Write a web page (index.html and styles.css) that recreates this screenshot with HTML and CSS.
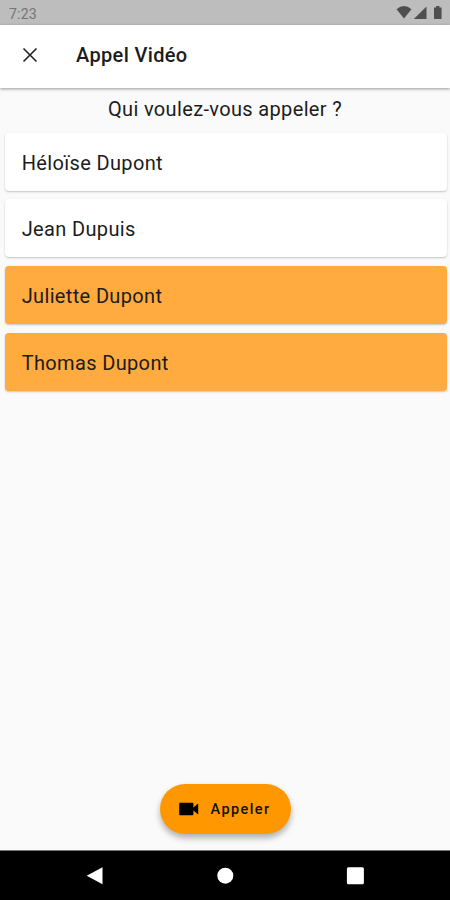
FILE: index.html
```
<!DOCTYPE html>
<html lang="fr">
<head>
    <meta charset="UTF-8">
    <meta name="viewport" content="width=device-width, initial-scale=1.0">
    <title>Appel Vidéo</title>
    <link rel="stylesheet" href="styles.css">
</head>
<body>
    <div class="status-bar">
        <span class="clock">7:23</span>
        <svg class="status-icons" width="48" height="16" viewBox="0 0 48 16">
            <path d="M0.5 4.2Q8-2.4 15.5 4.2L8 13.6z"></path>
            <path d="M30.5 1.5V14H17.8z"></path>
            <path d="M38 2.5h2.2V1h3.2v1.5h2.2V14H38z"></path>
        </svg>
    </div>

    <header class="app-bar">
        <button class="close-button" aria-label="Fermer">
            <svg width="16" height="16" viewBox="0 0 16 16">
                <path d="M1.5 1.5l13 13M14.5 1.5l-13 13"></path>
            </svg>
        </button>
        <h1>Appel Vidéo</h1>
    </header>

    <main class="content">
        <p class="question">Qui voulez-vous appeler ?</p>
        <ul class="contacts">
            <li class="contact">Héloïse Dupont</li>
            <li class="contact">Jean Dupuis</li>
            <li class="contact selected">Juliette Dupont</li>
            <li class="contact selected">Thomas Dupont</li>
        </ul>
        <button class="call-button">
            <svg width="20" height="14" viewBox="0 0 20 14">
                <path d="M1.2 0.8h12.2q1 0 1 1v3.6l4.8-4v11.2l-4.8-4v3.6q0 1-1 1H1.2q-1 0-1-1V1.8q0-1 1-1z"></path>
            </svg>
            <span>Appeler</span>
        </button>
    </main>

    <nav class="nav-bar">
        <svg width="18" height="18" viewBox="0 0 18 18"><path d="M16.5 0.3v17L0.7 8.8z"></path></svg>
        <svg width="18" height="18" viewBox="0 0 18 18"><circle cx="9.3" cy="8.7" r="8"></circle></svg>
        <svg width="18" height="18" viewBox="0 0 18 18"><rect x="0.9" y="0.2" width="17" height="17" rx="1.5"></rect></svg>
    </nav>
</body>
</html>
```
FILE: styles.css
```
:root {
    --bg-color: #fafafa;
    --primary: #ff9800;
    --selected: #ffab40;
    --text-color: #1c1c1c;
}

* {
    margin: 0;
    padding: 0;
    box-sizing: border-box;
}

body {
    font-family: Roboto, sans-serif;
    background-color: var(--bg-color);
    color: var(--text-color);
    height: 100vh;
    display: flex;
    flex-direction: column;
    overflow: hidden;
}

button {
    border: none;
    background: none;
    font-family: inherit;
    color: inherit;
}

.status-bar {
    height: 25px;
    flex-shrink: 0;
    padding: 2px 6px 0 9px;
    background-color: #bdbdbd;
    display: flex;
    align-items: center;
    justify-content: space-between;
}

.clock {
    font-size: 14px;
    letter-spacing: 0.2px;
    color: #757575;
}

.status-icons {
    fill: #4f4f4f;
    margin-top: -1px;
}

.app-bar {
    height: 63px;
    flex-shrink: 0;
    padding: 0 21px 3px;
    background-color: #fff;
    display: flex;
    align-items: center;
    gap: 38px;
    box-shadow: 0 1px 3px rgba(0, 0, 0, 0.4);
    z-index: 1;
}

.close-button {
    width: 17px;
    height: 20px;
    display: flex;
    align-items: center;
    justify-content: center;
}

.close-button svg {
    fill: none;
    stroke: #222;
    stroke-width: 1.6;
    flex-shrink: 0;
}

.app-bar h1 {
    font-size: 20px;
    font-weight: 500;
    line-height: 24px;
    letter-spacing: 0.35px;
}

.content {
    flex: 1;
    display: flex;
    flex-direction: column;
    align-items: center;
}

.question {
    height: 44.5px;
    padding-top: 9px;
    font-size: 20px;
    line-height: 24px;
    letter-spacing: 0.35px;
}

.contacts {
    align-self: stretch;
    list-style: none;
    display: flex;
    flex-direction: column;
    gap: 8.4px;
    padding: 0 3.5px 0 5px;
}

.contact {
    height: 58.3px;
    padding: 2px 16.7px 0;
    display: flex;
    align-items: center;
    background-color: #fff;
    border-radius: 4px;
    font-size: 20px;
    letter-spacing: 0.35px;
    box-shadow: 0 1px 2px rgba(0, 0, 0, 0.22);
}

.contact.selected {
    background-color: var(--selected);
}

.call-button {
    width: 131px;
    height: 50px;
    margin-top: auto;
    margin-bottom: 16px;
    padding-left: 19.5px;
    display: flex;
    align-items: center;
    gap: 11.5px;
    border-radius: 25px;
    background-color: var(--primary);
    color: #111;
    font-size: 14.5px;
    font-weight: 500;
    letter-spacing: 1.4px;
    box-shadow: 0 4px 6px rgba(0, 0, 0, 0.3);
}

.nav-bar {
    height: 50px;
    flex-shrink: 0;
    padding: 0 86px;
    border-top: 1px solid #777;
    background-color: #000;
    display: flex;
    align-items: center;
    justify-content: space-between;
}

.nav-bar svg {
    fill: #fff;
}
```
